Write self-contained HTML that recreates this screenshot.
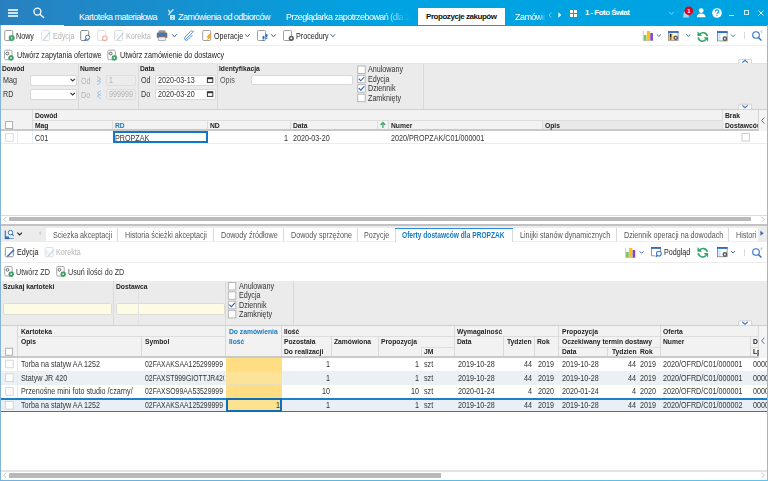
<!DOCTYPE html>
<html><head><meta charset="utf-8">
<style>
*{box-sizing:border-box;margin:0;padding:0}
html,body{width:768px;height:481px;overflow:hidden;background:#fff}
body{position:relative;font-family:"Liberation Sans",sans-serif;font-size:8px;letter-spacing:-0.45px;color:#222}
.a{position:absolute}
.t{position:absolute;white-space:nowrap;line-height:11.4px;height:11.4px;font-size:8.6px;letter-spacing:0;transform-origin:0 0;transform:scaleX(.835)}
.r{transform-origin:100% 0}
.b{font-weight:bold;letter-spacing:0;font-size:7.8px;transform:scaleX(.865)}
.g{color:#b4b4b4}
.w{color:#fff}
.bl{color:#1479c2}
.hl{position:absolute;height:1px}
.vl{position:absolute;width:1px}
.cb{position:absolute;width:8px;height:8px;background:#fff;border:1px solid #a9a9a9}
.cbl{position:absolute;width:8px;height:8px;background:#fff;border:1px solid #d4d4d4}
.inp{position:absolute;background:#fff;border:1px solid #d8d8d8;border-radius:2px}
.dis{position:absolute;background:#ececec;border:1px solid #dedede;border-radius:2px}
svg{position:absolute;overflow:visible}
</style></head><body>

<!-- TOP BAR -->
<div class="a" style="left:0;top:0;width:768px;height:25.6px;background:linear-gradient(90deg,#2980bf 0px,#00a3e2 380px,#00a3e2 768px)"></div>


<div class="a" style="left:1px;top:24.7px;width:63px;height:1px;background:#fff"></div>
<!-- hamburger -->
<div class="a" style="left:8px;top:9px;width:10px;height:1.7px;background:#cfe3f2"></div>
<div class="a" style="left:8px;top:12px;width:10px;height:1.7px;background:#cfe3f2"></div>
<div class="a" style="left:8px;top:15px;width:10px;height:1.7px;background:#cfe3f2"></div>
<!-- search -->
<svg style="left:0;top:0" width="50" height="25"><circle cx="37.4" cy="11.6" r="3.5" fill="none" stroke="#fff" stroke-width="1.3"/><line x1="40" y1="14.2" x2="43.6" y2="17.6" stroke="#fff" stroke-width="1.4" stroke-linecap="round"/></svg>
<div class="t w" style="left:79px;top:11.5px;font-size:9px;letter-spacing:-0.55px;transform:none">Kartoteka materiałowa</div>
<svg style="left:0;top:0" width="200" height="25"><path d="M168.7 10.3 L170 13 M173 9.8 L168.6 14.6" stroke="#cde8f7" stroke-width="1.3" stroke-linecap="round" fill="none"/><rect x="170" y="15" width="5" height="4.8" fill="#cde8f7"/><circle cx="172.5" cy="16.5" r="0.6" fill="#3aa0dc"/><circle cx="172.5" cy="18.5" r="0.6" fill="#3aa0dc"/></svg>
<div class="t w" style="left:178px;top:11.5px;font-size:9px;letter-spacing:-0.55px;transform:none">Zamówienia od odbiorców</div>
<div class="t" style="left:286px;top:11.5px;font-size:9px;letter-spacing:-0.55px;transform:none;width:124px;overflow:hidden;-webkit-mask-image:linear-gradient(90deg,#000 78%,rgba(0,0,0,.35) 92%,transparent 100%);color:#fff">Przeglądarka zapotrzebowań (dla 2</div>
<!-- active tab -->
<div class="a" style="left:418px;top:8px;width:87.3px;height:17px;background:#fff"></div>
<div class="t b" style="left:426px;top:10.5px;font-size:8px;letter-spacing:-0.45px;color:#111;transform:none">Propozycje zakupów</div>
<div class="t" style="left:515px;top:11.5px;font-size:9px;letter-spacing:-0.55px;transform:none;width:31px;overflow:hidden;-webkit-mask-image:linear-gradient(90deg,#000 75%,transparent 100%);color:#fff">Zamówienia</div>
<svg style="left:545px;top:10px" width="20" height="10"><path d="M6.2 2.5 L4.2 5 L6.2 7.5" stroke="#8fd4f0" stroke-width="0.9" fill="none"/><path d="M13.4 2.2 L16.2 5 L13.4 7.8 Z" fill="#fff"/></svg>
<!-- grid icon -->
<div class="a" style="left:570px;top:10px;width:3px;height:3px;background:#fff"></div>
<div class="a" style="left:574px;top:10px;width:3px;height:3px;background:#fff"></div>
<div class="a" style="left:570px;top:14px;width:3px;height:3px;background:#fff"></div>
<div class="a" style="left:574px;top:14px;width:3px;height:3px;background:#fff"></div>
<div class="t b w" style="left:585px;top:7.2px;font-size:8px;letter-spacing:-0.55px;transform:none">1 - Foto Świat</div>
<svg style="left:668px;top:10px" width="8" height="6"><path d="M1.2 2 L3.5 4.2 L5.8 2" stroke="#a6dcf3" stroke-width="0.9" fill="none"/></svg>
<!-- bell -->
<svg style="left:680px;top:5px" width="16" height="16"><path d="M2.5 12.5 h7 l-1 -1.3 v-2.5 a2.5 2.5 0 0 0 -5 0 v2.5 z" fill="#9fd9f2"/><circle cx="8.8" cy="5.7" r="4.3" fill="#e4001b"/><text x="8.8" y="8" font-size="6" font-weight="bold" fill="#fff" text-anchor="middle" font-family="Liberation Sans">1</text></svg>
<!-- person -->
<svg style="left:696px;top:8px" width="11" height="10"><circle cx="5.2" cy="2.6" r="2.4" fill="#fff"/><path d="M0.8 9.2 Q1 5.6 5.2 5.6 Q9.4 5.6 9.6 9.2 z" fill="#fff"/></svg>
<!-- question -->
<svg style="left:711px;top:7px" width="12" height="12"><circle cx="6" cy="6" r="4.8" fill="#fff"/><path d="M4.3 4.7 Q4.3 2.9 6 2.9 Q7.7 2.9 7.7 4.5 Q7.7 5.4 6.5 6 Q6 6.3 6 7.2" stroke="#00a3e2" stroke-width="1.2" fill="none"/><circle cx="6" cy="8.6" r="0.7" fill="#00a3e2"/></svg>
<div class="vl" style="left:725px;top:0;height:25px;background:#0d95cf"></div>
<div class="a" style="left:729px;top:14.5px;width:5px;height:1px;background:#c6ebf9"></div>
<div class="a" style="left:744px;top:10px;width:5px;height:5px;border:1px solid #c6ebf9"></div>
<svg style="left:758px;top:10px" width="6" height="6"><path d="M0.5 0.5 L5.5 5.5 M5.5 0.5 L0.5 5.5" stroke="#d4f0fb" stroke-width="1"/></svg>

<!-- TOOLBAR -->
<svg style="left:0;top:0" width="768" height="481"><rect x="4.7" y="30.5" width="8" height="10" rx="1.2" fill="#fff" stroke="#a0a0a0" stroke-width="1" opacity="1"/><circle cx="11.7" cy="38" r="3" fill="#3fa56c"/><path d="M11.7 36.6 v2.8" stroke="#cfe9d9" stroke-width="0.9"/><rect x="41.5" y="30.5" width="8" height="10" rx="1.2" fill="#fff" stroke="#dedede" stroke-width="1" opacity="1"/><path d="M43.5 40 L50 32" stroke="#bcd6ee" stroke-width="1.2"/><rect x="80.7" y="30.5" width="8" height="10" rx="1.2" fill="#fff" stroke="#8a8a8a" stroke-width="1" opacity="1"/><circle cx="87.6" cy="37.3" r="2.1" fill="#fff" stroke="#2f72c4" stroke-width="1"/><path d="M86 38.9 L84.3 40.6" stroke="#2f72c4" stroke-width="1.1"/><rect x="97.7" y="30.5" width="8" height="10" rx="1.2" fill="#fff" stroke="#e0e0e0" stroke-width="1" opacity="1"/><circle cx="104.8" cy="38.3" r="2.3" fill="#fff" stroke="#eeaaa0" stroke-width="1.1"/><rect x="114.5" y="30.5" width="8" height="10" rx="1.2" fill="#fff" stroke="#dedede" stroke-width="1" opacity="1"/><path d="M116 33 v5 M117.5 34 v3" stroke="#d8e4ee" stroke-width="0.8"/><path d="M117 40 L123.5 33" stroke="#bcd6ee" stroke-width="1.2"/><rect x="158.5" y="30.3" width="7" height="3" rx="1" fill="#9a9a9a"/><rect x="156.8" y="32.5" width="10.5" height="5.5" rx="1.2" fill="#6e6e6e"/><rect x="158" y="33" width="8" height="2.2" fill="#3a78c6"/><rect x="158.5" y="37" width="7" height="3.5" fill="#e8eef6" stroke="#8a8a8a" stroke-width="0.6"/><path d="M172.2 34.3 L174.45 36.8 L176.7 34.3" stroke="#3b5d8f" stroke-width="1" fill="none"/><path d="M185.5 39.5 L192.6 32.4 Q194.2 30.8 192.7 31.3 Q191.9 30.2 190.4 31.5 L185 37 Q183.8 38.6 185.2 39.9 Q186.6 41 188 39.6 L192.5 35" stroke="#5a90d2" stroke-width="1" fill="none"/><rect x="202.7" y="30.5" width="8" height="10" rx="1.2" fill="#fff" stroke="#a0a0a0" stroke-width="1" opacity="1"/><path d="M209.5 33.5 L206.2 37.6 L208.5 37.6 L206 41 L211.8 36.4 L209.4 36.4 L211.2 33.5 Z" fill="#f3a41c"/><path d="M245.2 34.3 L247.45 36.8 L249.7 34.3" stroke="#3b5d8f" stroke-width="1" fill="none"/><rect x="257.5" y="30.5" width="8" height="10" rx="1.2" fill="#fff" stroke="#a0a0a0" stroke-width="1" opacity="1"/><ellipse cx="263.5" cy="37.5" rx="1.1" ry="1.7" fill="#2c6fc0"/><ellipse cx="266.5" cy="35.5" rx="1.1" ry="1.7" fill="#2c6fc0"/><rect x="262.6" y="39.6" width="1.8" height="1.2" fill="#2c6fc0"/><rect x="265.6" y="37.6" width="1.8" height="1.2" fill="#2c6fc0"/><path d="M271.2 34.3 L273.45 36.8 L275.7 34.3" stroke="#3b5d8f" stroke-width="1" fill="none"/><rect x="283.5" y="30.5" width="8" height="10" rx="1.2" fill="#fff" stroke="#a0a0a0" stroke-width="1" opacity="1"/><circle cx="291.3" cy="38.3" r="2.6" fill="#5a5a5a"/><circle cx="291.3" cy="38.3" r="1.04" fill="#fff"/><path d="M330.6 34.3 L332.85 36.8 L335.1 34.3" stroke="#3b5d8f" stroke-width="1" fill="none"/><path d="M643.3 30.5 V40.5 H653.3" stroke="#aaa" stroke-width="0.6" fill="none"/><rect x="643.8" y="35.0" width="2.7" height="5.5" fill="#7cc36a"/><rect x="646.8" y="31.0" width="3.3" height="9.5" fill="#fbc21c"/><rect x="650.3" y="33.0" width="2.6" height="7.5" fill="#7d45c8"/><path d="M656.8 34.4 L658.9 36.4 L661.0 34.4" stroke="#4a6fa0" stroke-width="1" fill="none"/><rect x="668.5" y="31.7" width="9.6" height="8.6" fill="#fff" stroke="#8a8a8a" stroke-width="0.9"/><rect x="668" y="31.2" width="10.5" height="1.7" fill="#2f6cc0"/><rect x="668.8" y="33.2" width="3.8" height="7" fill="#f4c04a"/><path d="M670.7 34 v3.6 M670.7 38.6 v1" stroke="#111" stroke-width="1.2"/><circle cx="675.6" cy="37.8" r="2.4" fill="#5a5a5a"/><circle cx="675.6" cy="37.8" r="0.9" fill="#fff"/><path d="M686.2 34.4 L688.3000000000001 36.4 L690.4000000000001 34.4" stroke="#4a6fa0" stroke-width="1" fill="none"/><path d="M699.6 34.5 A4.3 4.3 0 0 1 707.3 36.099999999999994" stroke="#2ea66a" stroke-width="1.6" fill="none"/><path d="M697.5 31.19999999999999 L697.5 35.89999999999998 L702 35.89999999999998 Z" fill="#2ea66a"/><path d="M698.2 37.39999999999998 A4.3 4.3 0 0 0 705.8 39.599999999999994" stroke="#2ea66a" stroke-width="1.6" fill="none"/><path d="M708.1 37.29999999999998 L708.1 41.69999999999999 L703.6 37.29999999999998 Z" fill="#2ea66a"/><rect x="717.5" y="31.7" width="9.6" height="9.2" fill="#fff" stroke="#8a8a8a" stroke-width="0.9"/><rect x="717" y="31.2" width="10.6" height="1.9" fill="#2f6cc0"/><rect x="718.2" y="33.8" width="2.4" height="6.4" fill="#c8e8f8"/><circle cx="724.9" cy="38.7" r="2.4" fill="#5a5a5a"/><circle cx="724.9" cy="38.7" r="0.9" fill="#fff"/><path d="M731 34.6 L733.0 36.6 L735 34.6" stroke="#4a6fa0" stroke-width="1" fill="none"/><path d="M744.5 32 v7" stroke="#d0d0d0" stroke-width="0.8"/><circle cx="756" cy="35" r="3.3" fill="none" stroke="#2f72c4" stroke-width="1.1"/><path d="M758.3 37.4 L761.5 40.6" stroke="#2f72c4" stroke-width="1.4"/><path d="M760.5 30.8 L762 33 M761.2 31 L762.6 31" stroke="#7aa0cc" stroke-width="0.6"/><rect x="4.5" y="50.2" width="7.5" height="9.5" rx="1.2" fill="#fff" stroke="#a8a8a8" stroke-width="1" opacity="1"/><circle cx="7.3" cy="53.5" r="1.4" fill="none" stroke="#555" stroke-width="0.9"/><circle cx="11" cy="57.900000000000006" r="2.1" fill="#3a9e66"/><circle cx="13.10" cy="57.90" r="0.85" fill="#3a9e66"/><circle cx="12.48" cy="59.38" r="0.85" fill="#3a9e66"/><circle cx="11.00" cy="60.00" r="0.85" fill="#3a9e66"/><circle cx="9.52" cy="59.38" r="0.85" fill="#3a9e66"/><circle cx="8.90" cy="57.90" r="0.85" fill="#3a9e66"/><circle cx="9.52" cy="56.42" r="0.85" fill="#3a9e66"/><circle cx="11.00" cy="55.80" r="0.85" fill="#3a9e66"/><circle cx="12.48" cy="56.42" r="0.85" fill="#3a9e66"/><circle cx="11" cy="57.900000000000006" r="0.9" fill="#e8f4ec"/><rect x="107.9" y="50.2" width="7.5" height="9.5" rx="1.2" fill="#fff" stroke="#a8a8a8" stroke-width="1" opacity="1"/><circle cx="110.7" cy="53.5" r="1.4" fill="none" stroke="#555" stroke-width="0.9"/><circle cx="114.4" cy="57.900000000000006" r="2.1" fill="#3a9e66"/><circle cx="116.50" cy="57.90" r="0.85" fill="#3a9e66"/><circle cx="115.88" cy="59.38" r="0.85" fill="#3a9e66"/><circle cx="114.40" cy="60.00" r="0.85" fill="#3a9e66"/><circle cx="112.92" cy="59.38" r="0.85" fill="#3a9e66"/><circle cx="112.30" cy="57.90" r="0.85" fill="#3a9e66"/><circle cx="112.92" cy="56.42" r="0.85" fill="#3a9e66"/><circle cx="114.40" cy="55.80" r="0.85" fill="#3a9e66"/><circle cx="115.88" cy="56.42" r="0.85" fill="#3a9e66"/><circle cx="114.4" cy="57.900000000000006" r="0.9" fill="#e8f4ec"/></svg><div class="t " style="left:16.3px;top:30.8px;color:#222">Nowy</div>
<div class="t g" style="left:52.7px;top:30.8px;">Edycja</div>
<div class="t g" style="left:125.8px;top:30.8px;">Korekta</div>
<div class="t " style="left:214px;top:30.8px;">Operacje</div>
<div class="t " style="left:295.8px;top:30.8px;">Procedury</div>
<div class="t " style="left:16.5px;top:50.4px;">Utwórz zapytania ofertowe</div>
<div class="t " style="left:119.6px;top:50.4px;">Utwórz zamówienie do dostawcy</div>
<div class="hl" style="left:1px;top:45px;width:766px;background:#f0f0f0"></div>
<!-- FILTER1 -->
<div class="a" style="left:1px;top:63px;width:766px;height:46.5px;background:#ebebeb"></div>
<div class="hl" style="left:1px;top:63px;width:766px;background:#e4e4e4"></div>
<div class="hl" style="left:1px;top:109px;width:766px;height:1px;background:#cfcfcf"></div>
<div class="vl" style="left:78px;top:64px;height:45px;background:#d9d9d9"></div>
<div class="vl" style="left:138px;top:64px;height:45px;background:#d9d9d9"></div>
<div class="vl" style="left:217px;top:64px;height:45px;background:#d9d9d9"></div>
<div class="vl" style="left:423px;top:64px;height:45px;background:#d9d9d9"></div>
<div class="t b" style="left:1.7px;top:63.3px;">Dowód</div>
<div class="t " style="left:3px;top:75.2px;color:#333">Mag</div>
<div class="t " style="left:3px;top:89.2px;color:#333">RD</div>
<div class="t b" style="left:80px;top:63.3px;">Numer</div>
<div class="t g" style="left:81px;top:75.8px;">Od</div>
<div class="t g" style="left:81px;top:89.8px;">Do</div>
<div class="t b" style="left:140px;top:63.3px;">Data</div>
<div class="t " style="left:141px;top:75.2px;color:#333">Od</div>
<div class="t " style="left:141px;top:89.2px;color:#333">Do</div>
<div class="t b" style="left:218.6px;top:63.3px;">Identyfikacja</div>
<div class="t " style="left:219.9px;top:75.2px;color:#555">Opis</div>
<div class="inp" style="left:30.4px;top:74.6px;width:46.8px;height:11px"></div>
<div class="inp" style="left:30.4px;top:88.6px;width:46.8px;height:11.8px"></div>
<div class="dis" style="left:106px;top:74.8px;width:30.4px;height:11.2px"></div>
<div class="dis" style="left:106px;top:88.6px;width:30.4px;height:11.4px"></div>
<div class="t g" style="left:108.5px;top:75.2px;">1</div>
<div class="t g" style="left:108.5px;top:89.2px;">999999</div>
<div class="inp" style="left:155px;top:74.5px;width:60.5px;height:11px"></div>
<div class="inp" style="left:155px;top:88.5px;width:60.5px;height:11.5px"></div>
<div class="t " style="left:157.8px;top:75.2px;color:#333">2020-03-13</div>
<div class="t " style="left:157.8px;top:89.2px;color:#333">2020-03-20</div>
<div class="inp" style="left:251.4px;top:74.5px;width:101.7px;height:10.8px"></div>
<div class="t " style="left:368.1px;top:64.3px;color:#333">Anulowany</div>
<div class="t " style="left:368.1px;top:73.6px;color:#333">Edycja</div>
<div class="t " style="left:368.1px;top:83.0px;color:#333">Dziennik</div>
<div class="t " style="left:368.1px;top:92.5px;color:#333">Zamknięty</div>
<svg style="left:0;top:0" width="768" height="481"><path d="M70.5 78.8 L72.7 81.0 L74.9 78.8" stroke="#333" stroke-width="1.1" fill="none"/><path d="M70.5 92.8 L72.7 95.0 L74.9 92.8" stroke="#333" stroke-width="1.1" fill="none"/><path d="M97.2 76.6 L100.8 79.2 L97.2 81.8 M97.2 79.6 L100.8 82.2 L97.2 84.8" stroke="#8ec0ea" stroke-width="0.9" fill="none"/><path d="M100.8 90.6 L97.2 93.2 L100.8 95.8 M100.8 93.6 L97.2 96.2 L100.8 98.8" stroke="#8ec0ea" stroke-width="0.9" fill="none"/><rect x="207.4" y="77.8" width="5.4" height="4.6" fill="none" stroke="#333" stroke-width="1"/><rect x="207.4" y="77.8" width="5.4" height="1.4" fill="#333"/><path d="M208.5 77.3 v1 M211.7 77.3 v1" stroke="#333" stroke-width="0.8"/><rect x="207.4" y="91.8" width="5.4" height="4.6" fill="none" stroke="#333" stroke-width="1"/><rect x="207.4" y="91.8" width="5.4" height="1.4" fill="#333"/><path d="M208.5 91.3 v1 M211.7 91.3 v1" stroke="#333" stroke-width="0.8"/><rect x="357.7" y="66.0" width="7.5" height="7.5" fill="#fff" stroke="#b0b0b0" stroke-width="0.9"/><rect x="357.7" y="75.3" width="7.5" height="7.5" fill="#fff" stroke="#b0b0b0" stroke-width="0.9"/><path d="M358.7 78.69999999999999 L360.8 80.8 L364.3 77.0" stroke="#2f62a8" stroke-width="1.1" fill="none"/><rect x="357.7" y="84.7" width="7.5" height="7.5" fill="#fff" stroke="#b0b0b0" stroke-width="0.9"/><path d="M358.7 88.1 L360.8 90.2 L364.3 86.4" stroke="#2f62a8" stroke-width="1.1" fill="none"/><rect x="357.7" y="94.2" width="7.5" height="7.5" fill="#fff" stroke="#b0b0b0" stroke-width="0.9"/><path d="M738.7 63.6 V60.2 Q738.7 59.4 739.5 59.4 H750.8 Q751.6 59.4 751.6 60.2 V63.6" fill="#fafafa" stroke="#c8c8c8" stroke-width="0.8"/><path d="M742.3 62.6 L745.0 60.300000000000004 L747.6999999999999 62.6" stroke="#3a78c6" stroke-width="1.2" fill="none"/><path d="M738.7 109.3 V105 Q738.7 104.2 739.5 104.2 H750.8 Q751.6 104.2 751.6 105 V109.3" fill="#fafafa" stroke="#c8c8c8" stroke-width="0.8"/><path d="M742.3 105.4 L745.0 107.7 L747.6999999999999 105.4" stroke="#3a78c6" stroke-width="1.2" fill="none"/></svg><!-- GRID1 -->
<div class="a" style="left:1px;top:110.3px;width:766px;height:19px;background:#f2f2f2"></div>
<div class="a" style="left:543px;top:120.5px;width:179px;height:8.7px;background:#eaeaea"></div>
<div class="hl" style="left:32px;top:120px;width:690px;background:#dedede"></div>
<div class="a" style="left:1px;top:129px;width:758px;height:2px;background:#c9c9c9"></div>
<div class="vl" style="left:32px;top:110.3px;height:19px;background:#dcdcdc"></div>
<div class="vl" style="left:722px;top:110.3px;height:19px;background:#dcdcdc"></div>
<div class="vl" style="left:112px;top:120.5px;height:8.8px;background:#dcdcdc"></div>
<div class="vl" style="left:207px;top:120.5px;height:8.8px;background:#dcdcdc"></div>
<div class="vl" style="left:290px;top:120.5px;height:8.8px;background:#dcdcdc"></div>
<div class="vl" style="left:377px;top:120.5px;height:8.8px;background:#dcdcdc"></div>
<div class="vl" style="left:388px;top:120.5px;height:8.8px;background:#dcdcdc"></div>
<div class="vl" style="left:542px;top:120.5px;height:8.8px;background:#dcdcdc"></div>
<div class="vl" style="left:758px;top:110.3px;height:20.7px;background:#d4d4d4"></div>
<div class="a" style="left:758.8px;top:110.3px;width:8.2px;height:20.7px;background:#f4f4f4"></div>
<div class="t b" style="left:35px;top:109.8px;">Dowód</div>
<div class="t b" style="left:35px;top:119.8px;">Mag</div>
<div class="t b bl" style="left:115px;top:119.8px;">RD</div>
<div class="t b" style="left:210.3px;top:119.8px;">ND</div>
<div class="t b" style="left:292.9px;top:119.8px;">Data</div>
<div class="t b" style="left:391px;top:119.8px;">Numer</div>
<div class="t b" style="left:544.6px;top:119.8px;">Opis</div>
<div class="t b" style="left:724.9px;top:110px;">Brak</div>
<div class="t b" style="left:724.9px;top:119.8px;width:38.2px;overflow:hidden">Dostawców</div>
<div class="hl" style="left:1px;top:143px;width:766px;background:#e6eef5"></div>
<div class="vl" style="left:17px;top:131px;height:12.6px;background:#e4eef8"></div>
<div class="vl" style="left:32px;top:131px;height:12.6px;background:#e4eef8"></div>
<div class="t " style="left:35px;top:132.6px;color:#333">C01</div>
<div class="a" style="left:113px;top:130.9px;width:95px;height:12.5px;border:2px solid #1477c6"></div>
<div class="t " style="left:115px;top:132.6px;color:#333">PROPZAK</div>
<div class="t " style="left:283.5px;top:132.6px;color:#333">1</div>
<div class="t " style="left:293.2px;top:132.6px;color:#333">2020-03-20</div>
<div class="t " style="left:391px;top:132.6px;color:#333">2020/PROPZAK/C01/000001</div>
<svg style="left:0;top:0" width="768" height="481"><rect x="5.6" y="121.6" width="7" height="7" fill="#fff" stroke="#a8a8a8" stroke-width="0.9"/><rect x="5.6" y="133.6" width="7.6" height="7.6" fill="#fff" stroke="#d8d8d8" stroke-width="0.9"/><rect x="742" y="133.4" width="7.6" height="7.6" fill="#fff" stroke="#c8c8c8" stroke-width="0.9"/><path d="M382.9 128 V122.8 M380.6 125 L382.9 122.5 L385.2 125" stroke="#3ea86c" stroke-width="1.3" fill="none"/><path d="M764.3 117.5 L761.6 120.5 L764.3 123.5" stroke="#3a78c6" stroke-width="1" fill="none"/></svg><div class="hl" style="left:1px;top:215px;width:766px;background:#dcdcdc"></div>
<div class="a" style="left:9px;top:217px;width:741.5px;height:4px;background:#bababa"></div>
<svg style="left:0;top:0" width="768" height="481"><path d="M6.2 217 L3.8 219.4 L6.2 221.8" stroke="#b8b8b8" stroke-width="0.8" fill="none"/><path d="M761.8 217 L764.2 219.4 L761.8 221.8" stroke="#b8b8b8" stroke-width="0.8" fill="none"/></svg><div class="a" style="left:1px;top:224px;width:766px;height:2px;background:#c2c2c2"></div>
<!-- TABS -->
<div class="a" style="left:1px;top:226.2px;width:766px;height:16px;background:#ececec"></div>
<div class="a" style="left:46.3px;top:228.2px;width:712px;height:13.5px;background:#fff"></div>
<div class="vl" style="left:117px;top:228.2px;height:13.5px;background:#d9d9d9"></div>
<div class="vl" style="left:213px;top:228.2px;height:13.5px;background:#d9d9d9"></div>
<div class="vl" style="left:283px;top:228.2px;height:13.5px;background:#d9d9d9"></div>
<div class="vl" style="left:357px;top:228.2px;height:13.5px;background:#d9d9d9"></div>
<div class="vl" style="left:395px;top:228.2px;height:13.5px;background:#d9d9d9"></div>
<div class="vl" style="left:512px;top:228.2px;height:13.5px;background:#d9d9d9"></div>
<div class="vl" style="left:616px;top:228.2px;height:13.5px;background:#d9d9d9"></div>
<div class="vl" style="left:728px;top:228.2px;height:13.5px;background:#d9d9d9"></div>
<div class="hl" style="left:395px;top:227.5px;width:117.5px;background:#2b8fd6"></div>
<div class="hl" style="left:1px;top:241px;width:394px;background:#eeeeee"></div>
<div class="hl" style="left:513px;top:241px;width:254px;background:#eeeeee"></div>
<div class="t " style="left:52.5px;top:230.2px;color:#555">Sciezka akceptacji</div>
<div class="t " style="left:124.6px;top:230.2px;color:#555">Historia ścieżki akceptacji</div>
<div class="t " style="left:220.5px;top:230.2px;color:#555">Dowody źródłowe</div>
<div class="t " style="left:290.5px;top:230.2px;color:#555">Dowody sprzężone</div>
<div class="t " style="left:363.5px;top:230.2px;color:#555">Pozycje</div>
<div class="t b bl" style="left:402px;top:230.2px;font-size:8.4px;letter-spacing:0;transform:scaleX(.79);top:229.9px">Oferty dostawców dla PROPZAK</div>
<div class="t " style="left:519.5px;top:230.2px;color:#555">Linijki stanów dynamicznych</div>
<div class="t " style="left:623.6px;top:230.2px;color:#555">Dziennik operacji na dowodach</div>
<div class="t" style="left:735.5px;top:230.2px;width:24px;overflow:hidden;color:#555">Historia</div>
<div class="a" style="left:758.5px;top:226.2px;width:8.5px;height:15.5px;background:#ececec"></div>
<svg style="left:0;top:0" width="768" height="481"><path d="M5.3 230.5 V238.5 H13.5" stroke="#3a7cc8" stroke-width="1.2" fill="none"/><rect x="5" y="236.5" width="4" height="2.6" fill="#2f6cc0"/><circle cx="10.5" cy="232.6" r="2.2" fill="#fff" stroke="#2f72c4" stroke-width="1"/><path d="M12 234.2 L13.6 235.8" stroke="#2f72c4" stroke-width="1.1"/><path d="M10 238.4 h4" stroke="#a0b8d8" stroke-width="0.6"/><path d="M17.3 232.7 L19.6 235.0 L21.9 232.7" stroke="#222" stroke-width="1.1" fill="none"/><path d="M41 231 L38.6 233.2 L41 235.4 Z" fill="#c4cfdc"/><path d="M760.4 230.8 L763.6 233.3 L760.4 235.8 Z" fill="#3e6aa8"/><rect x="5.3" y="247.5" width="8" height="9.3" rx="1.2" fill="#fff" stroke="#909090" stroke-width="1" opacity="1"/><path d="M7.3 256.6 L14 249.8" stroke="#2f6cc0" stroke-width="1.4"/><rect x="45.1" y="247.5" width="8" height="9.3" rx="1.2" fill="#fff" stroke="#e0e0e0" stroke-width="1" opacity="1"/><path d="M46.6 250 v5 M48 251 v3" stroke="#d4e2ee" stroke-width="0.8"/><path d="M47.6 256.6 L53.8 250" stroke="#bcd6ee" stroke-width="1.2"/><rect x="4.7" y="266.5" width="7.5" height="9.5" rx="1.2" fill="#fff" stroke="#a8a8a8" stroke-width="1" opacity="1"/><circle cx="7.5" cy="269.8" r="1.4" fill="none" stroke="#555" stroke-width="0.9"/><circle cx="11.2" cy="274.2" r="2.1" fill="#3a9e66"/><circle cx="13.30" cy="274.20" r="0.85" fill="#3a9e66"/><circle cx="12.68" cy="275.68" r="0.85" fill="#3a9e66"/><circle cx="11.20" cy="276.30" r="0.85" fill="#3a9e66"/><circle cx="9.72" cy="275.68" r="0.85" fill="#3a9e66"/><circle cx="9.10" cy="274.20" r="0.85" fill="#3a9e66"/><circle cx="9.72" cy="272.72" r="0.85" fill="#3a9e66"/><circle cx="11.20" cy="272.10" r="0.85" fill="#3a9e66"/><circle cx="12.68" cy="272.72" r="0.85" fill="#3a9e66"/><circle cx="11.2" cy="274.2" r="0.9" fill="#e8f4ec"/><rect x="56.7" y="266.5" width="7.5" height="9.5" rx="1.2" fill="#fff" stroke="#a8a8a8" stroke-width="1" opacity="1"/><circle cx="59.5" cy="269.8" r="1.4" fill="none" stroke="#555" stroke-width="0.9"/><circle cx="63.2" cy="274.2" r="2.1" fill="#3a9e66"/><circle cx="65.30" cy="274.20" r="0.85" fill="#3a9e66"/><circle cx="64.68" cy="275.68" r="0.85" fill="#3a9e66"/><circle cx="63.20" cy="276.30" r="0.85" fill="#3a9e66"/><circle cx="61.72" cy="275.68" r="0.85" fill="#3a9e66"/><circle cx="61.10" cy="274.20" r="0.85" fill="#3a9e66"/><circle cx="61.72" cy="272.72" r="0.85" fill="#3a9e66"/><circle cx="63.20" cy="272.10" r="0.85" fill="#3a9e66"/><circle cx="64.68" cy="272.72" r="0.85" fill="#3a9e66"/><circle cx="63.2" cy="274.2" r="0.9" fill="#e8f4ec"/><path d="M625.5999999999999 247.5 V257.5 H635.5999999999999" stroke="#aaa" stroke-width="0.6" fill="none"/><rect x="626.0999999999999" y="252.0" width="2.7" height="5.5" fill="#7cc36a"/><rect x="629.0999999999999" y="248.0" width="3.3" height="9.5" fill="#fbc21c"/><rect x="632.5999999999999" y="250.0" width="2.6" height="7.5" fill="#7d45c8"/><path d="M639.6 251.3 L641.6 253.3 L643.6 251.3" stroke="#4a6fa0" stroke-width="1" fill="none"/><path d="M651.5 255.8 V248 H660.6 V252" stroke="#8a8a8a" stroke-width="0.9" fill="none"/><path d="M651.5 255.8 H655" stroke="#8a8a8a" stroke-width="0.9"/><rect x="651" y="247" width="10" height="1.8" fill="#2f6cc0"/><circle cx="658.9" cy="253.6" r="2.4" fill="#fff" stroke="#3a78c6" stroke-width="1.1"/><path d="M657.1 255.4 L655.8 256.8" stroke="#2f6cc0" stroke-width="1.3"/><path d="M699.6 250.3 A4.3 4.3 0 0 1 707.3 251.9" stroke="#2ea66a" stroke-width="1.6" fill="none"/><path d="M697.5 247 L697.5 251.7 L702 251.7 Z" fill="#2ea66a"/><path d="M698.2 253.2 A4.3 4.3 0 0 0 705.8 255.4" stroke="#2ea66a" stroke-width="1.6" fill="none"/><path d="M708.1 253.1 L708.1 257.5 L703.6 253.1 Z" fill="#2ea66a"/><rect x="717.5" y="247.5" width="9.6" height="9.2" fill="#fff" stroke="#8a8a8a" stroke-width="0.9"/><rect x="717" y="247" width="10.6" height="1.9" fill="#2f6cc0"/><rect x="718.2" y="249.6" width="2.4" height="6.4" fill="#c8e8f8"/><circle cx="724.9" cy="254.5" r="2.4" fill="#5a5a5a"/><circle cx="724.9" cy="254.5" r="0.9" fill="#fff"/><path d="M731 251 L733.0 253 L735 251" stroke="#4a6fa0" stroke-width="1" fill="none"/><path d="M744.5 249 v7" stroke="#d0d0d0" stroke-width="0.8"/><circle cx="756" cy="252" r="3.3" fill="none" stroke="#2f72c4" stroke-width="1.1"/><path d="M758.3 254.4 L761.5 257.6" stroke="#2f72c4" stroke-width="1.4"/><path d="M760.5 247.8 L762 250 M761.2 248 L762.6 248" stroke="#7aa0cc" stroke-width="0.6"/></svg><div class="t " style="left:16.5px;top:246.8px;color:#222">Edycja</div>
<div class="t g" style="left:55.5px;top:246.8px;">Korekta</div>
<div class="t " style="left:663.5px;top:246.8px;color:#222">Podgląd</div>
<div class="hl" style="left:1px;top:262px;width:766px;background:#ededed"></div>
<div class="t " style="left:16.2px;top:266.8px;color:#333">Utwórz ZD</div>
<div class="t " style="left:68px;top:266.8px;color:#333">Usuń ilości do ZD</div>
<!-- FILTER2 -->
<div class="a" style="left:1px;top:280.7px;width:766px;height:44.5px;background:#ebebeb"></div>
<div class="hl" style="left:1px;top:325px;width:766px;height:1px;background:#cfcfcf"></div>
<div class="vl" style="left:113px;top:281px;height:44px;background:#d9d9d9"></div>
<div class="vl" style="left:225px;top:281px;height:44px;background:#d9d9d9"></div>
<div class="vl" style="left:293px;top:281px;height:44px;background:#d9d9d9"></div>
<div class="t b" style="left:3px;top:280.5px;">Szukaj kartoteki</div>
<div class="t b" style="left:116px;top:280.5px;">Dostawca</div>
<div class="a" style="left:2.5px;top:303.3px;width:109px;height:11.4px;background:#fdfae6;border:1px solid #dcdcd4;border-radius:2px"></div>
<div class="a" style="left:115.5px;top:303.3px;width:109px;height:11.4px;background:#fdfae6;border:1px solid #dcdcd4;border-radius:2px"></div>
<div class="vl" style="left:138px;top:292px;height:33px;background:#e2e2e2"></div>
<div class="t " style="left:238.6px;top:280.8px;color:#333">Anulowany</div>
<div class="t " style="left:238.6px;top:290.1px;color:#333">Edycja</div>
<div class="t " style="left:238.6px;top:299.5px;color:#333">Dziennik</div>
<div class="t " style="left:238.6px;top:308.7px;color:#333">Zamknięty</div>
<svg style="left:0;top:0" width="768" height="481"><rect x="228.3" y="282.5" width="7.5" height="7.5" fill="#fff" stroke="#b0b0b0" stroke-width="0.9"/><rect x="228.3" y="291.8" width="7.5" height="7.5" fill="#fff" stroke="#b0b0b0" stroke-width="0.9"/><rect x="228.3" y="301.2" width="7.5" height="7.5" fill="#fff" stroke="#b0b0b0" stroke-width="0.9"/><path d="M229.3 304.6 L231.4 306.7 L234.9 302.9" stroke="#2f62a8" stroke-width="1.1" fill="none"/><rect x="228.3" y="310.4" width="7.5" height="7.5" fill="#fff" stroke="#b0b0b0" stroke-width="0.9"/><path d="M738.7 325.3 V321.6 Q738.7 320.8 739.5 320.8 H750.8 Q751.6 320.8 751.6 321.6 V325.3" fill="#fafafa" stroke="#c8c8c8" stroke-width="0.8"/><path d="M742.3 322 L745.0 324.3 L747.6999999999999 322" stroke="#3a78c6" stroke-width="1.2" fill="none"/></svg><!-- GRID2 -->
<div class="a" style="left:1px;top:326px;width:766px;height:30px;background:#f2f2f2"></div>
<div class="a" style="left:1px;top:356px;width:758px;height:2px;background:#c9c9c9"></div>
<div class="hl" style="left:17px;top:336px;width:208px;background:#dedede"></div>
<div class="hl" style="left:281px;top:336px;width:477px;background:#dedede"></div>
<div class="hl" style="left:421px;top:347px;width:33px;background:#dedede"></div>
<div class="hl" style="left:558px;top:347px;width:102px;background:#dedede"></div>
<div class="hl" style="left:750px;top:347px;width:8px;background:#dedede"></div>
<div class="vl" style="left:17px;top:326px;height:30px;background:#dadada"></div>
<div class="vl" style="left:225px;top:326px;height:30px;background:#dadada"></div>
<div class="vl" style="left:281px;top:326px;height:30px;background:#dadada"></div>
<div class="vl" style="left:454px;top:326px;height:30px;background:#dadada"></div>
<div class="vl" style="left:558px;top:326px;height:30px;background:#dadada"></div>
<div class="vl" style="left:660px;top:326px;height:30px;background:#dadada"></div>
<div class="vl" style="left:758px;top:326px;height:30px;background:#dadada"></div>
<div class="vl" style="left:141px;top:336px;height:20px;background:#dadada"></div>
<div class="vl" style="left:331px;top:336px;height:20px;background:#dadada"></div>
<div class="vl" style="left:378px;top:336px;height:20px;background:#dadada"></div>
<div class="vl" style="left:503px;top:336px;height:20px;background:#dadada"></div>
<div class="vl" style="left:534px;top:336px;height:20px;background:#dadada"></div>
<div class="vl" style="left:750px;top:336px;height:20px;background:#dadada"></div>
<div class="vl" style="left:421px;top:347px;height:9px;background:#dadada"></div>
<div class="vl" style="left:607px;top:347px;height:9px;background:#dadada"></div>
<div class="a" style="left:758.7px;top:326px;width:8.3px;height:31.8px;background:#f4f4f4"></div>
<div class="t b" style="left:20.5px;top:325.6px;">Kartoteka</div>
<div class="t b" style="left:20.5px;top:336.1px;">Opis</div>
<div class="t b" style="left:144.5px;top:336.1px;">Symbol</div>
<div class="t b bl" style="left:228.5px;top:325.6px;">Do zamówienia</div>
<div class="t b bl" style="left:228.5px;top:336.1px;">Ilość</div>
<div class="t b" style="left:284.2px;top:325.6px;">Ilość</div>
<div class="t b" style="left:284.2px;top:336.1px;">Pozostała</div>
<div class="t b" style="left:284.2px;top:345.8px;">Do realizacji</div>
<div class="t b" style="left:334.3px;top:336.1px;">Zamówiona</div>
<div class="t b" style="left:381px;top:336.1px;">Propozycja</div>
<div class="t b" style="left:424px;top:345.8px;">JM</div>
<div class="t b" style="left:457.2px;top:325.6px;">Wymagalność</div>
<div class="t b" style="left:457.2px;top:336.1px;">Data</div>
<div class="t b" style="left:506.8px;top:336.1px;">Tydzien</div>
<div class="t b" style="left:537px;top:336.1px;">Rok</div>
<div class="t b" style="left:561.7px;top:325.6px;">Propozycja</div>
<div class="t b" style="left:561.7px;top:336.1px;">Oczekiwany termin dostawy</div>
<div class="t b" style="left:561.7px;top:345.8px;">Data</div>
<div class="t b" style="left:611.5px;top:345.8px;">Tydzien</div>
<div class="t b" style="left:640px;top:345.8px;">Rok</div>
<div class="t b" style="left:662.5px;top:325.6px;">Oferta</div>
<div class="t b" style="left:662.5px;top:336.1px;">Numer</div>
<div class="t b" style="left:752.5px;top:336.1px;width:7px;overflow:hidden">D</div>
<div class="t b" style="left:752.5px;top:345.8px;width:7px;overflow:hidden">Lp</div>
<div class="a" style="left:1px;top:357.9px;width:766px;height:13.100000000000023px;background:#fff"></div>
<div class="a" style="left:225.8px;top:357.9px;width:56px;height:13.100000000000023px;background:#fedd83"></div>
<div class="a" style="left:1px;top:371px;width:766px;height:13.600000000000023px;background:#ebf0f4"></div>
<div class="a" style="left:225.8px;top:371px;width:56px;height:13.600000000000023px;background:#fde398"></div>
<div class="a" style="left:1px;top:384.6px;width:766px;height:13.699999999999989px;background:#fff"></div>
<div class="a" style="left:225.8px;top:384.6px;width:56px;height:13.699999999999989px;background:#fedd83"></div>
<div class="a" style="left:1px;top:398.3px;width:766px;height:14.0px;background:#e9eff4"></div>
<div class="a" style="left:225.8px;top:398.3px;width:56px;height:14.0px;background:#fde291"></div>
<div class="hl" style="left:225.8px;top:370.5px;width:56px;background:#eadfb8"></div>
<div class="hl" style="left:225.8px;top:384.1px;width:56px;background:#eadfb8"></div>
<div class="vl" style="left:17px;top:358px;height:40.4px;background:#e2ecf6"></div>
<div class="a" style="left:1px;top:398.2px;width:766px;height:1.6px;background:#1a80c8"></div>
<div class="a" style="left:1px;top:410.8px;width:766px;height:1.6px;background:#1a80c8"></div>
<div class="a" style="left:226px;top:398.2px;width:56px;height:14.2px;border:2px solid #0f6fb6"></div>
<svg style="left:0;top:0" width="768" height="481"><rect x="5.6" y="348.2" width="7" height="7" fill="#fff" stroke="#a8a8a8" stroke-width="0.9"/><rect x="5.6" y="360.2" width="7.6" height="7.6" fill="#fff" stroke="#d2d2d2" stroke-width="0.9"/><rect x="5.6" y="373.8" width="7.6" height="7.6" fill="#fff" stroke="#d2d2d2" stroke-width="0.9"/><rect x="5.6" y="387.6" width="7.6" height="7.6" fill="#fff" stroke="#d2d2d2" stroke-width="0.9"/><rect x="5.6" y="401.4" width="7.6" height="7.6" fill="#fff" stroke="#d2d2d2" stroke-width="0.9"/><path d="M764.3 337.8 L761.6 340.8 L764.3 343.8" stroke="#3a78c6" stroke-width="1" fill="none"/></svg><div class="t " style="left:21px;top:358.9px;color:#333">Torba na statyw AA 1252</div>
<div class="t" style="left:144.7px;top:358.9px;width:98.6px;overflow:hidden;color:#333;transform:scaleX(.8)">02FAXAKSAA125299999</div>
<div class="t r" style="left:270.2px;top:358.9px;width:60px;text-align:right;color:#333">1</div>
<div class="t r" style="left:359px;top:358.9px;width:60px;text-align:right;color:#333">1</div>
<div class="t " style="left:424.2px;top:358.9px;color:#333">szt</div>
<div class="t " style="left:457.8px;top:358.9px;color:#333">2019-10-28</div>
<div class="t r" style="left:472.20000000000005px;top:358.9px;width:60px;text-align:right;color:#333">44</div>
<div class="t " style="left:537.5px;top:358.9px;color:#333">2019</div>
<div class="t " style="left:561.9px;top:358.9px;color:#333">2019-10-28</div>
<div class="t r" style="left:575.5px;top:358.9px;width:60px;text-align:right;color:#333">44</div>
<div class="t " style="left:640px;top:358.9px;color:#333">2019</div>
<div class="t " style="left:663px;top:358.9px;color:#333">2020/OFRD/C01/000001</div>
<div class="t" style="left:753.2px;top:358.9px;width:16.5px;overflow:hidden;color:#333">000001</div>
<div class="t " style="left:21px;top:373.3px;color:#333">Statyw JR 420</div>
<div class="t" style="left:144.7px;top:373.3px;width:98.6px;overflow:hidden;color:#333;transform:scaleX(.8)">02FAXST999GIOTTJR420</div>
<div class="t r" style="left:270.2px;top:373.3px;width:60px;text-align:right;color:#333">1</div>
<div class="t r" style="left:359px;top:373.3px;width:60px;text-align:right;color:#333">1</div>
<div class="t " style="left:424.2px;top:373.3px;color:#333">szt</div>
<div class="t " style="left:457.8px;top:373.3px;color:#333">2019-10-28</div>
<div class="t r" style="left:472.20000000000005px;top:373.3px;width:60px;text-align:right;color:#333">44</div>
<div class="t " style="left:537.5px;top:373.3px;color:#333">2019</div>
<div class="t " style="left:561.9px;top:373.3px;color:#333">2019-10-28</div>
<div class="t r" style="left:575.5px;top:373.3px;width:60px;text-align:right;color:#333">44</div>
<div class="t " style="left:640px;top:373.3px;color:#333">2019</div>
<div class="t " style="left:663px;top:373.3px;color:#333">2020/OFRD/C01/000001</div>
<div class="t" style="left:753.2px;top:373.3px;width:16.5px;overflow:hidden;color:#333">000001</div>
<div class="t " style="left:21px;top:386.2px;color:#333">Przenośne mini foto studio /czarny/</div>
<div class="t" style="left:144.7px;top:386.2px;width:98.6px;overflow:hidden;color:#333;transform:scaleX(.8)">02FAXSO99AA53529999</div>
<div class="t r" style="left:270.2px;top:386.2px;width:60px;text-align:right;color:#333">10</div>
<div class="t r" style="left:359px;top:386.2px;width:60px;text-align:right;color:#333">10</div>
<div class="t " style="left:424.2px;top:386.2px;color:#333">szt</div>
<div class="t " style="left:457.8px;top:386.2px;color:#333">2020-01-24</div>
<div class="t r" style="left:472.20000000000005px;top:386.2px;width:60px;text-align:right;color:#333">4</div>
<div class="t " style="left:537.5px;top:386.2px;color:#333">2020</div>
<div class="t " style="left:561.9px;top:386.2px;color:#333">2020-01-24</div>
<div class="t r" style="left:575.5px;top:386.2px;width:60px;text-align:right;color:#333">4</div>
<div class="t " style="left:640px;top:386.2px;color:#333">2020</div>
<div class="t " style="left:663px;top:386.2px;color:#333">2020/OFRD/C01/000001</div>
<div class="t" style="left:753.2px;top:386.2px;width:16.5px;overflow:hidden;color:#333">000001</div>
<div class="t " style="left:21px;top:400.3px;color:#333">Torba na statyw AA 1252</div>
<div class="t" style="left:144.7px;top:400.3px;width:98.6px;overflow:hidden;color:#333;transform:scaleX(.8)">02FAXAKSAA125299999</div>
<div class="t r" style="left:270.2px;top:400.3px;width:60px;text-align:right;color:#333">1</div>
<div class="t r" style="left:359px;top:400.3px;width:60px;text-align:right;color:#333">1</div>
<div class="t " style="left:424.2px;top:400.3px;color:#333">szt</div>
<div class="t " style="left:457.8px;top:400.3px;color:#333">2019-10-28</div>
<div class="t r" style="left:472.20000000000005px;top:400.3px;width:60px;text-align:right;color:#333">44</div>
<div class="t " style="left:537.5px;top:400.3px;color:#333">2019</div>
<div class="t " style="left:561.9px;top:400.3px;color:#333">2019-10-28</div>
<div class="t r" style="left:575.5px;top:400.3px;width:60px;text-align:right;color:#333">44</div>
<div class="t " style="left:640px;top:400.3px;color:#333">2019</div>
<div class="t " style="left:663px;top:400.3px;color:#333">2020/OFRD/C01/000002</div>
<div class="t" style="left:753.2px;top:400.3px;width:16.5px;overflow:hidden;color:#333">000001</div>
<div class="t r" style="left:220px;top:400.3px;width:60px;text-align:right;color:#333">1</div>
<div class="hl" style="left:1px;top:470px;width:766px;height:1.6px;background:#e4e4e4"></div>
<div class="a" style="left:9px;top:473.2px;width:431.5px;height:4.4px;background:#b9b9b9"></div>
<svg style="left:0;top:0" width="768" height="481"><path d="M6.2 472.6 L3.8 475.2 L6.2 477.8" stroke="#b8b8b8" stroke-width="0.8" fill="none"/><path d="M761.8 472.6 L764.2 475.2 L761.8 477.8" stroke="#b8b8b8" stroke-width="0.8" fill="none"/></svg><!-- outer blue frame -->
<div class="vl" style="left:0;top:25px;height:456px;background:#84b4d8"></div>
<div class="vl" style="left:767px;top:25px;height:456px;background:#6cc8ec"></div>
<div class="hl" style="left:0;top:480px;width:768px;background:linear-gradient(90deg,#72b0dc,#5ab8e0 50%,#5cc4ec)"></div>


</body></html>
